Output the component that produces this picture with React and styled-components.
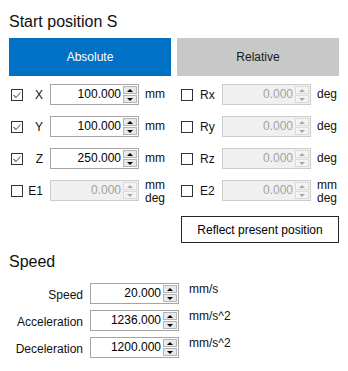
import React from 'react';
import styled, { createGlobalStyle } from 'styled-components';

const GlobalStyle = createGlobalStyle`
  body {
    margin: 0;
    background: #fff;
    color: #000;
    font-family: "Liberation Sans", Arial, sans-serif;
    font-size: 12px;
  }
`;

const axes = [
  { name: 'X', value: '100.000', unit: 'mm', checked: true },
  { name: 'Rx', value: '0.000', unit: 'deg', checked: false },
  { name: 'Y', value: '100.000', unit: 'mm', checked: true },
  { name: 'Ry', value: '0.000', unit: 'deg', checked: false },
  { name: 'Z', value: '250.000', unit: 'mm', checked: true },
  { name: 'Rz', value: '0.000', unit: 'deg', checked: false },
  { name: 'E1', value: '0.000', unit: ['mm', 'deg'], checked: false },
  { name: 'E2', value: '0.000', unit: ['mm', 'deg'], checked: false },
];

const speeds = [
  { name: 'Speed', value: '20.000', unit: 'mm/s' },
  { name: 'Acceleration', value: '1236.000', unit: 'mm/s^2' },
  { name: 'Deceleration', value: '1200.000', unit: 'mm/s^2' },
];

const NumberBox = ({ value, disabled }) => (
  <NumBox $disabled={disabled}>
    <Value>{value}</Value>
    <Spinner>
      <SpinButton $disabled={disabled}>
        <Arrow $up $disabled={disabled} />
      </SpinButton>
      <SpinButton $disabled={disabled}>
        <Arrow $disabled={disabled} />
      </SpinButton>
    </Spinner>
  </NumBox>
);

const CheckBox = ({ checked, side }) => (
  <Check $side={side}>
    {checked && (
      <svg width="10" height="10" viewBox="0 0 10 10">
        <polyline points="1.5,5 4,7.5 8.5,2.5" fill="none" stroke="#6b6b6b" strokeWidth="1.1" />
      </svg>
    )}
  </Check>
);

const App = () => {
  return (
    <Panel>
      <GlobalStyle />
      <SectionTitle>Start position S</SectionTitle>

      <ModeBar>
        <ModeButton $active>Absolute</ModeButton>
        <ModeButton>Relative</ModeButton>
      </ModeBar>

      <AxisGrid>
        {axes.map((axis, idx) => {
          const side = idx % 2 === 0 ? 'left' : 'right';
          const twoLine = Array.isArray(axis.unit);
          return (
            <Field key={axis.name}>
              <CheckBox checked={axis.checked} side={side} />
              <AxisLabel $side={side}>{axis.name}</AxisLabel>
              <NumberBox value={axis.value} disabled={!axis.checked} />
              <Unit $twoLine={twoLine}>
                {twoLine ? axis.unit.map(u => <div key={u}>{u}</div>) : axis.unit}
              </Unit>
            </Field>
          );
        })}
        <ReflectButton>Reflect present position</ReflectButton>
      </AxisGrid>

      <SectionTitle $top={9}>Speed</SectionTitle>

      <SpeedList>
        {speeds.map(item => (
          <SpeedRow key={item.name}>
            <SpeedLabel>{item.name}</SpeedLabel>
            <NumberBox value={item.value} />
            <SpeedUnit>{item.unit}</SpeedUnit>
          </SpeedRow>
        ))}
      </SpeedList>
    </Panel>
  );
};

export default App;

const Panel = styled.div`
  width: 348px;
  height: 371px;
  box-sizing: border-box;
  padding: 12px 9px 0;
  overflow: hidden;
`;

const SectionTitle = styled.h2`
  margin: ${p => p.$top || 0}px 0 0;
  font-size: 16px;
  font-weight: normal;
  line-height: 20px;
  color: #111;
`;

const ModeBar = styled.div`
  display: grid;
  grid-template-columns: 162px 162px;
  column-gap: 6px;
  margin-top: 6px;
`;

const ModeButton = styled.div`
  height: 38px;
  display: flex;
  align-items: center;
  justify-content: center;
  background: ${p => (p.$active ? '#0071c5' : '#c8c8c8')};
  color: ${p => (p.$active ? '#fff' : '#1a1a1a')};
  font-size: 12px;
`;

const AxisGrid = styled.div`
  display: grid;
  grid-template-columns: 162px 162px;
  column-gap: 6px;
  row-gap: 11px;
  margin-top: 8px;
`;

const Field = styled.div`
  display: flex;
  align-items: center;
  height: 21px;
`;

const Check = styled.span`
  width: 12px;
  height: 12px;
  box-sizing: border-box;
  border: 1px solid #333;
  background: #fff;
  margin-left: ${p => (p.$side === 'left' ? 2 : 4)}px;
  display: flex;
  align-items: center;
  justify-content: center;
  flex: none;
`;

const AxisLabel = styled.span`
  box-sizing: border-box;
  width: ${p => (p.$side === 'left' ? 27 : 29)}px;
  padding-top: 2px;
  padding-right: ${p => (p.$side === 'left' ? 7 : 0)}px;
  padding-left: ${p => (p.$side === 'left' ? 0 : 7)}px;
  text-align: ${p => (p.$side === 'left' ? 'right' : 'left')};
  line-height: 13px;
  color: #111;
  flex: none;
`;

const NumBox = styled.div`
  width: 89px;
  height: 21px;
  box-sizing: border-box;
  border: 1px solid ${p => (p.$disabled ? '#cccccc' : '#a5a5a5')};
  background: ${p => (p.$disabled ? '#f0f0f0' : '#fff')};
  color: ${p => (p.$disabled ? '#a0a0a0' : '#000')};
  display: flex;
  align-items: stretch;
  flex: none;
`;

const Value = styled.span`
  flex: 1;
  display: flex;
  align-items: center;
  justify-content: flex-end;
  padding-right: 2px;
  line-height: 13px;
`;

const Spinner = styled.div`
  width: 14px;
  margin: 1px 1px 1px 0;
  display: flex;
  flex-direction: column;
  gap: 1px;
`;

const SpinButton = styled.div`
  flex: 1;
  box-sizing: border-box;
  border: 1px solid ${p => (p.$disabled ? '#dadada' : '#b4b4b4')};
  background: ${p => (p.$disabled ? '#f4f4f4' : '#e9e9e9')};
  display: flex;
  align-items: center;
  justify-content: center;
`;

const Arrow = styled.span`
  width: 0;
  height: 0;
  border-left: 3px solid transparent;
  border-right: 3px solid transparent;
  ${p =>
    p.$up
      ? `border-bottom: 3px solid ${p.$disabled ? '#a8a8a8' : '#000'};`
      : `border-top: 3px solid ${p.$disabled ? '#a8a8a8' : '#000'};`}
`;

const Unit = styled.span`
  margin-left: 6px;
  line-height: 13px;
  color: #111;
  align-self: ${p => (p.$twoLine ? 'flex-start' : 'center')};
  margin-top: ${p => (p.$twoLine ? -1 : 0)}px;
`;

const ReflectButton = styled.div`
  grid-column: 2;
  justify-self: end;
  margin-top: 4px;
  width: 158px;
  height: 27px;
  box-sizing: border-box;
  border: 1px solid #262626;
  background: #fff;
  display: flex;
  align-items: center;
  justify-content: center;
  color: #000;
`;

const SpeedList = styled.div`
  display: flex;
  flex-direction: column;
  gap: 6px;
  margin-top: 11px;
`;

const SpeedRow = styled.div`
  display: flex;
  align-items: center;
  height: 21px;
`;

const SpeedLabel = styled.span`
  width: 74px;
  margin-right: 7px;
  padding-top: 3px;
  text-align: right;
  line-height: 13px;
  color: #111;
  flex: none;
`;

const SpeedUnit = styled.span`
  align-self: flex-start;
  margin-left: 10px;
  line-height: 13px;
  color: #111;
`;
